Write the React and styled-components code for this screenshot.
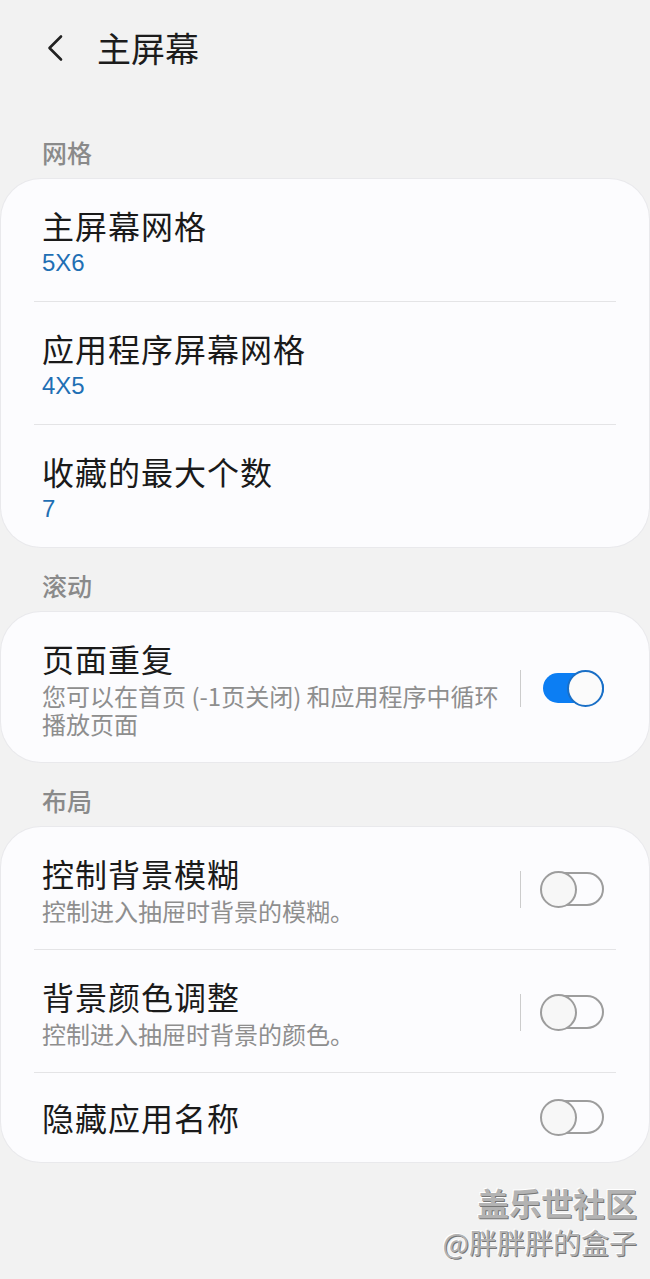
import React from 'react'
import styled, {createGlobalStyle} from 'styled-components'

const GlobalStyle = createGlobalStyle`
  body {
    margin: 0;
    background: #f2f2f2;
    font-family: "Noto Sans CJK SC", "Noto Sans", sans-serif;
  }
`

const Page = styled.div`
  min-height: 1279px;
  padding: 0 1px;
  box-sizing: border-box;
`
const Header = styled.div`
  height: 96px;
  display: flex;
  align-items: center;
  padding-left: 45px;
`
const BackIcon = styled.svg`
  width: 18px;
  height: 28px;
  flex-shrink: 0;
`
const Title = styled.h1`
  margin: 0 0 0 33px;
  font-size: 34px;
  font-weight: 400;
  line-height: 44px;
  color: #1c1c1c;
`
const SectionLabel = styled.div`
  padding: ${p => (p.first ? '40px' : '22px')} 41px 11px;
  font-size: 25px;
  line-height: 32px;
  font-weight: 500;
  color: #8a8a8a;
`
const Card = styled.div`
  background: #fcfcfe;
  border-radius: 40px;
  box-shadow: 0 0 0 1px #e9e9ec;
`
const Row = styled.div`
  display: flex;
  align-items: center;
  padding: ${p => (p.single ? '24px 45px 25px 41px' : '26px 45px 24px 41px')};
`
const Divider = styled.div`
  height: 1px;
  background: #e4e4e6;
  margin: 0 33px;
`
const TextBlock = styled.div`
  flex: 1;
  min-width: 0;
`
const ItemTitle = styled.div`
  font-size: 32px;
  line-height: 40px;
  letter-spacing: 1px;
  color: #1a1a1a;
`
const ItemSub = styled.div`
  margin-top: 4px;
  font-size: 24px;
  line-height: 28px;
  color: #8e8e8e;
`
const ItemValue = styled.div`
  margin-top: 4px;
  font-family: "Liberation Sans Narrow", "Liberation Sans", sans-serif;
  font-size: 24px;
  line-height: 28px;
  color: #1f6fb4;
`
const VLine = styled.div`
  width: 1px;
  height: 37px;
  background: #cccccc;
  margin: 0 19px 0 20px;
  flex-shrink: 0;
`
const ToggleBox = styled.div`
  position: relative;
  width: 64px;
  height: 37px;
  flex-shrink: 0;
`
const Track = styled.div`
  position: absolute;
  box-sizing: border-box;
  left: 3px;
  width: 61px;
  top: ${p => (p.on ? '3.5px' : '1.5px')};
  height: ${p => (p.on ? '30px' : '34px')};
  border-radius: 17px;
  background: ${p => (p.on ? '#0c7ef3' : 'transparent')};
  border: ${p => (p.on ? 'none' : '2px solid #9d9d9d')};
`
const Knob = styled.div`
  position: absolute;
  box-sizing: border-box;
  top: 0;
  left: ${p => (p.on ? '27px' : '0')};
  width: 37px;
  height: 37px;
  border-radius: 50%;
  background: ${p => (p.on ? '#fbfbfb' : '#f7f7f7')};
  border: 2px solid ${p => (p.on ? '#1a6fc6' : '#9d9d9d')};
`
const Watermark = styled.div`
  margin-top: 20px;
  padding-right: 12px;
  text-align: right;
  color: #b3b3b3;
  text-shadow: 1px 1px 0 #767676, -1px -1px 0 #ffffff;
`
const MarkBig = styled.div`
  font-size: 32px;
  line-height: 40px;
  font-weight: 700;
`
const MarkSmall = styled.div`
  font-size: 28px;
  line-height: 40px;
`

const Toggle = ({on}) => (
  <ToggleBox>
    <Track on={on} />
    <Knob on={on} />
  </ToggleBox>
)

const gridItems = [
  {title: '主屏幕网格', value: '5X6'},
  {title: '应用程序屏幕网格', value: '4X5'},
  {title: '收藏的最大个数', value: '7'}
]

const layoutItems = [
  {title: '控制背景模糊', sub: '控制进入抽屉时背景的模糊。'},
  {title: '背景颜色调整', sub: '控制进入抽屉时背景的颜色。'}
]

export default function App() {
  return (
    <Page>
      <GlobalStyle />
      <Header>
        <BackIcon viewBox="0 0 18 28">
          <path
            d="M15 2.5 L3.5 14 L15 25.5"
            fill="none"
            stroke="#222"
            strokeWidth="2.6"
            strokeLinecap="round"
            strokeLinejoin="round"
          />
        </BackIcon>
        <Title>主屏幕</Title>
      </Header>

      <SectionLabel first>网格</SectionLabel>
      <Card>
        {gridItems.map((item, i) => (
          <React.Fragment key={item.title}>
            {i > 0 && <Divider />}
            <Row>
              <TextBlock>
                <ItemTitle>{item.title}</ItemTitle>
                <ItemValue>{item.value}</ItemValue>
              </TextBlock>
            </Row>
          </React.Fragment>
        ))}
      </Card>

      <SectionLabel>滚动</SectionLabel>
      <Card>
        <Row>
          <TextBlock>
            <ItemTitle>页面重复</ItemTitle>
            <ItemSub>
              您可以在首页 (-1页关闭) 和应用程序中循环
              <br />
              播放页面
            </ItemSub>
          </TextBlock>
          <VLine />
          <Toggle on />
        </Row>
      </Card>

      <SectionLabel>布局</SectionLabel>
      <Card>
        {layoutItems.map(item => (
          <React.Fragment key={item.title}>
            <Row>
              <TextBlock>
                <ItemTitle>{item.title}</ItemTitle>
                <ItemSub>{item.sub}</ItemSub>
              </TextBlock>
              <VLine />
              <Toggle />
            </Row>
            <Divider />
          </React.Fragment>
        ))}
        <Row single>
          <TextBlock>
            <ItemTitle>隐藏应用名称</ItemTitle>
          </TextBlock>
          <Toggle />
        </Row>
      </Card>

      <Watermark>
        <MarkBig>盖乐世社区</MarkBig>
        <MarkSmall>@胖胖胖的盒子</MarkSmall>
      </Watermark>
    </Page>
  )
}
